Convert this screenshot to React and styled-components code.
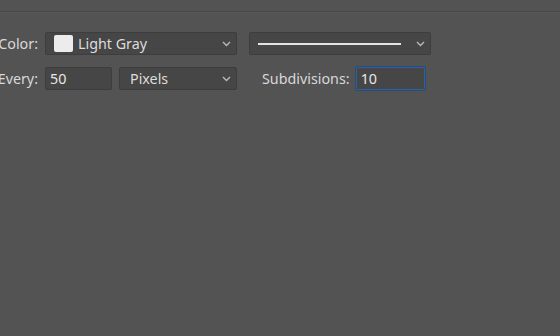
import React from "react";
import styled, { createGlobalStyle } from "styled-components";

const Global = createGlobalStyle`
  html, body { margin: 0; padding: 0; background: #535353; }
  body { font-family: "Noto Sans", "Open Sans", sans-serif; }
  #root { width: 560px; height: 336px; }
`;

const Page = styled.div`
  width: 560px;
  height: 336px;
  background: #535353;
  display: flex;
  flex-direction: column;
`;

const TopBar = styled.div`
  height: 11px;
  border-bottom: 1px solid #464646;
  box-shadow: 0 1px 0 #585858;
`;

const Form = styled.div`
  display: flex;
  flex-direction: column;
  gap: 12px;
  padding-top: 20px;
`;

const Row = styled.div`
  display: flex;
  align-items: center;
  height: 23px;
`;

const Label = styled.span`
  width: ${(p) => (p.$w ? `${p.$w}px` : "auto")};
  margin-left: ${(p) => p.$ml || 0}px;
  margin-right: ${(p) => p.$mr || 7}px;
  font-size: 14.3px;
  color: #d8d8d8;
  white-space: nowrap;
  display: flex;
  justify-content: flex-end;
`;

const Select = styled.div`
  box-sizing: border-box;
  width: ${(p) => p.$w}px;
  height: 23px;
  margin-right: ${(p) => p.$mr || 0}px;
  background: #464646;
  border: 1px solid #3d3d3d;
  border-radius: 2px;
  display: flex;
  align-items: center;
  padding: 0 5px 0 ${(p) => p.$pl || 8}px;
  gap: 5px;
  font-size: 14.3px;
  color: #dcdcdc;
`;

const Swatch = styled.span`
  width: 19px;
  height: 17px;
  background: #ececec;
  border-radius: 2px;
  flex: none;
`;

const Grow = styled.span`
  flex: 1;
  display: flex;
  align-items: center;
  white-space: nowrap;
`;

const LineSample = styled.span`
  display: block;
  width: 143px;
  height: 2px;
  background: #e2e2e2;
`;

const Input = styled.div`
  box-sizing: border-box;
  width: ${(p) => p.$w}px;
  height: 23px;
  margin-right: ${(p) => p.$mr || 0}px;
  background: #464646;
  border: 1px solid ${(p) => (p.$focus ? "#2f5f9c" : "#3d3d3d")};
  box-shadow: ${(p) => (p.$focus ? "0 0 0 1px #284c7a" : "none")};
  border-radius: 2px;
  display: flex;
  align-items: center;
  padding: 0 4px;
  font-size: 14.3px;
  color: #e6e6e6;
`;

const Chevron = () => (
  <svg width="9" height="6" viewBox="0 0 9 6" style={{ flex: "none" }}>
    <path d="M1 1 L4.5 4.5 L8 1" fill="none" stroke="#b8b8b8" strokeWidth="1.4" />
  </svg>
);

export default function App() {
  return (
    <Page>
      <Global />
      <TopBar />
      <Form>
        <Row>
          <Label $w={38}>Color:</Label>
          <Select $w={192} $mr={12}>
            <Swatch />
            <Grow>Light Gray</Grow>
            <Chevron />
          </Select>
          <Select $w={182}>
            <Grow>
              <LineSample />
            </Grow>
            <Chevron />
          </Select>
        </Row>
        <Row>
          <Label $w={38}>Every:</Label>
          <Input $w={67} $mr={7}>50</Input>
          <Select $w={118} $pl={10}>
            <Grow>Pixels</Grow>
            <Chevron />
          </Select>
          <Label $ml={25} $mr={6}>Subdivisions:</Label>
          <Input $w={69} $focus>10</Input>
        </Row>
      </Form>
    </Page>
  );
}
